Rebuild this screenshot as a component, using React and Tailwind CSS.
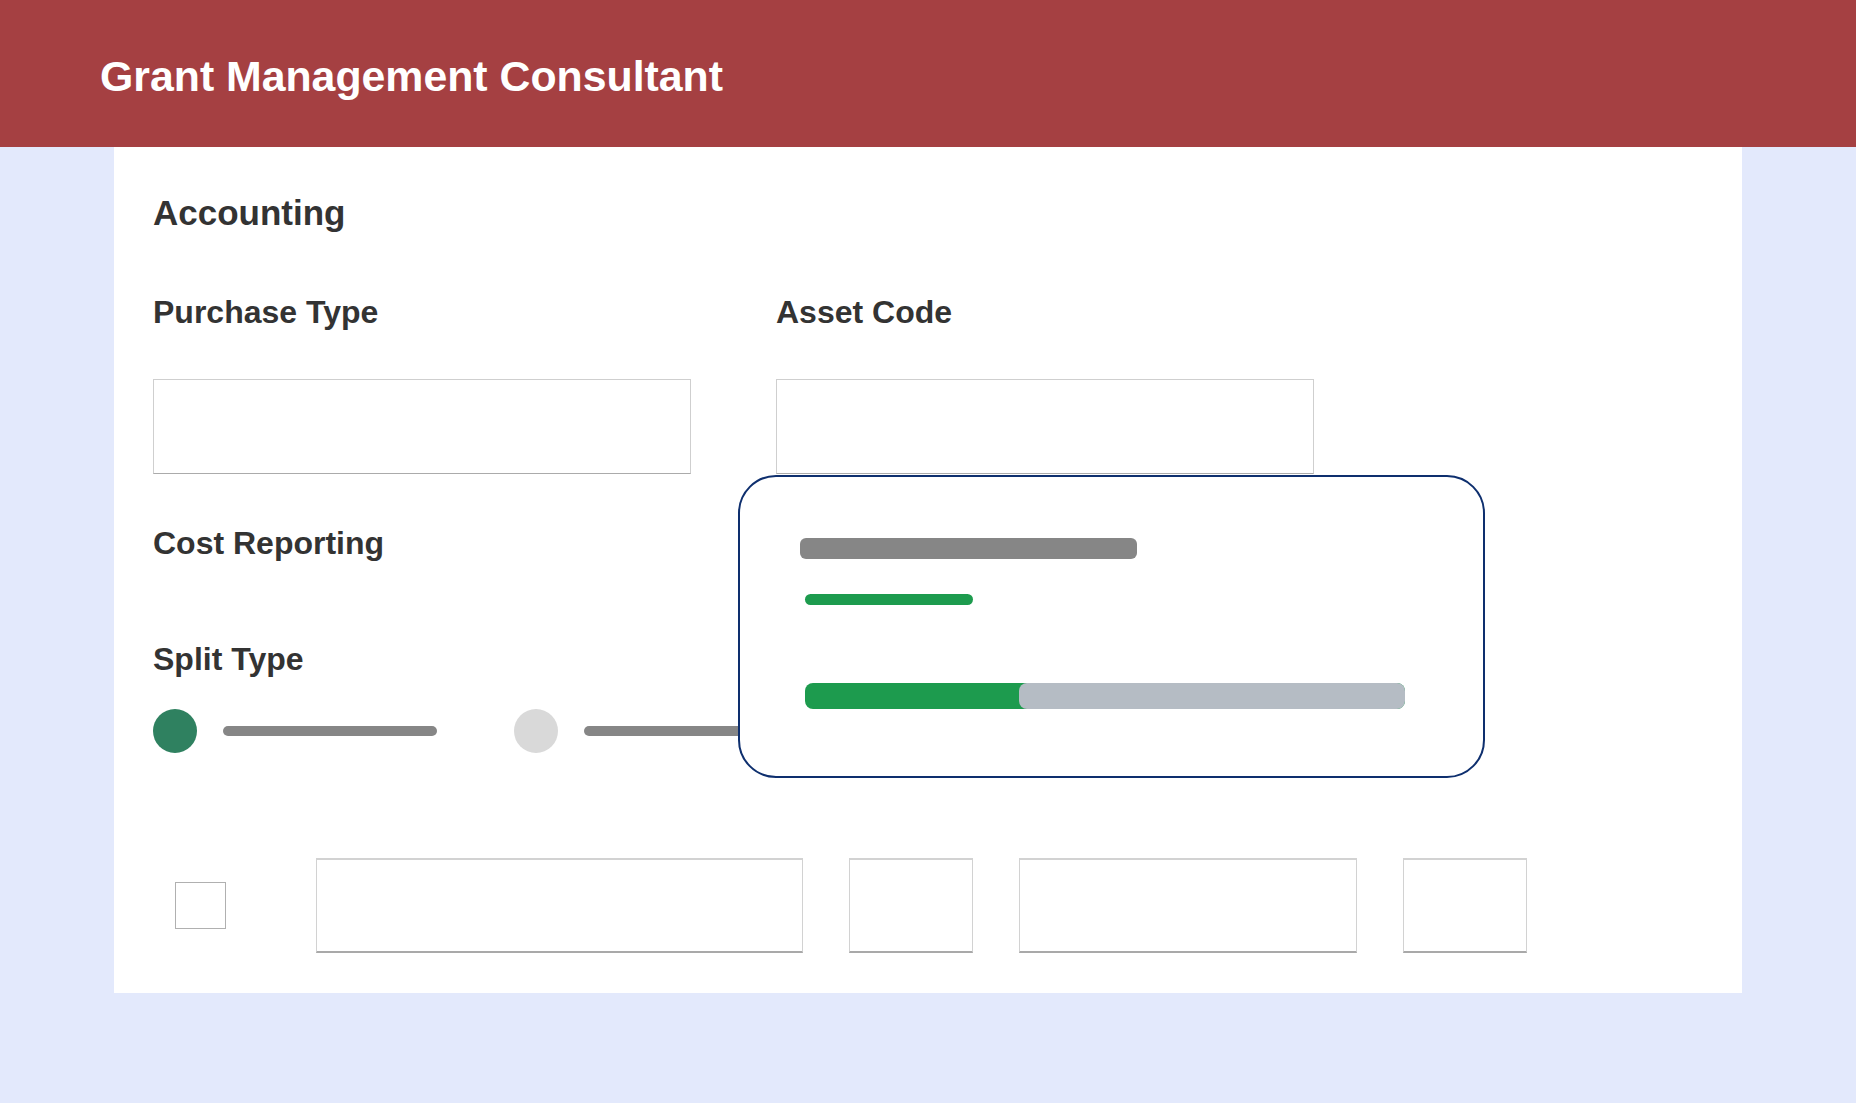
import React from "react"

const Field = ({ label, className = "", children }) => (
  <div className={`relative ${className}`}>
    <div className="text-[32px] leading-[36px] font-bold text-[#333333]">{label}</div>
    <div className="mt-[49px] h-[95px] w-[538px] border border-[#cfcfcf] border-b-[#ababab] bg-white" />
    {children}
  </div>
)

const Box = ({ w }) => (
  <div className={`h-[95px] ${w} border border-[#d2d2d2] border-t-2 border-b-2 border-b-[#a9a9a9] bg-white`} />
)

export default function App() {
  return (
    <div className="min-h-screen bg-[#e3e9fc]" style={{ fontFamily: '"Liberation Sans", Arial, sans-serif' }}>
      {/* Header */}
      <header className="h-[147px] bg-[#a54042] flex items-center px-[100px] pt-[5px]">
        <h1 className="text-[42.8px] font-bold text-white">Grant Management Consultant</h1>
      </header>

      {/* Panel */}
      <main className="mx-auto w-[1628px] bg-white pl-[39px] pt-[46px] pb-[40px]">
        <h2 className="text-[35px] leading-[40px] font-bold text-[#333333]">Accounting</h2>

        <div className="mt-[61px] flex gap-[85px]">
          <Field label="Purchase Type" />
          <Field label="Asset Code" className="z-10">
            {/* Popover */}
            <div className="absolute left-[-38px] top-[calc(100%+1px)] w-[747px] h-[303px] rounded-[38px] border-2 border-[#0e2f6e] bg-white pl-[60px] pt-[61px]">
              <div className="h-[21px] w-[337px] rounded-md bg-[#868686]" />
              <div className="mt-[35px] ml-[5px] h-[11px] w-[168px] rounded-full bg-[#1d9b4e]" />
              <div className="mt-[78px] ml-[5px] h-[26px] w-[600px] rounded-lg bg-[#1d9b4e]">
                <div className="ml-[214px] h-full rounded-lg bg-[#b5bcc4]" />
              </div>
            </div>
          </Field>
        </div>

        <div className="mt-[51px] text-[32px] leading-[36px] font-bold text-[#333333]">Cost Reporting</div>
        <div className="mt-[80px] text-[32px] leading-[36px] font-bold text-[#333333]">Split Type</div>

        {/* Radio options */}
        <div className="mt-[32px] flex items-center">
          <div className="h-[44px] w-[44px] rounded-full bg-[#2f8160]" />
          <div className="ml-[26px] h-[10px] w-[214px] rounded-full bg-[#868686]" />
          <div className="ml-[77px] h-[44px] w-[44px] rounded-full bg-[#d9d9d9]" />
          <div className="ml-[26px] h-[10px] w-[214px] rounded-full bg-[#868686]" />
        </div>

        {/* Split row */}
        <div className="mt-[105px] flex items-center">
          <div className="ml-[22px] h-[47px] w-[51px] border border-[#b0b0b0] bg-white" />
          <div className="ml-[90px] flex gap-[46px]">
            <Box w="w-[487px]" />
            <Box w="w-[124px]" />
            <Box w="w-[338px]" />
            <Box w="w-[124px]" />
          </div>
        </div>
      </main>
    </div>
  )
}
